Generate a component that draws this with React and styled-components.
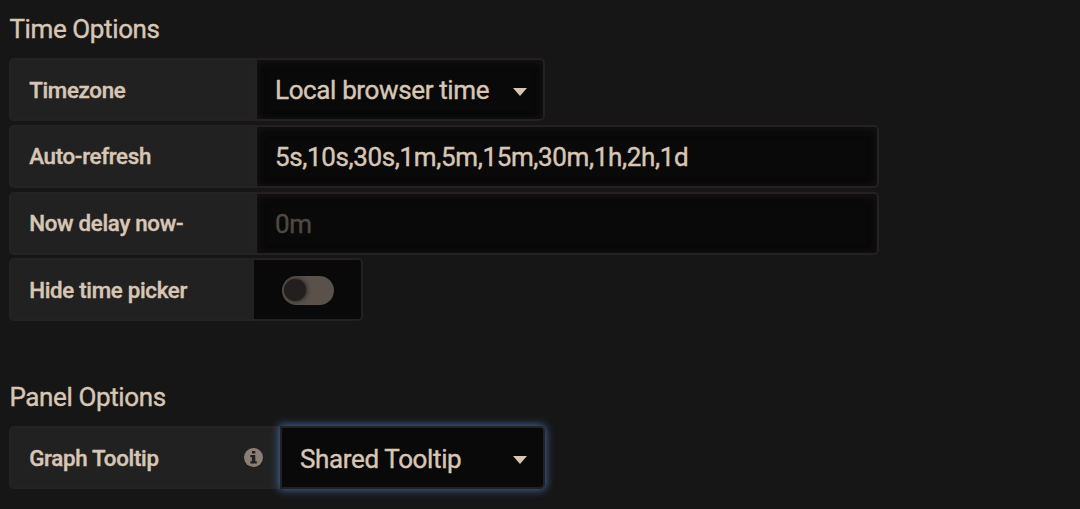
/* ------------------------- External Dependencies -------------------------- */
import React from 'react'
import styled, { createGlobalStyle } from 'styled-components'

/* --------------------------- Styled Components ---------------------------- */
const GlobalStyle = createGlobalStyle`
  * {
    box-sizing: border-box;
  }

  body {
    margin: 0;
    background: #161616;
    color: #d8c6b5;
    font-family: Roboto, "Liberation Sans", sans-serif;
    -webkit-text-stroke: 0.4px;
    overflow: hidden;
  }
`

const Page = styled.main`
  height: 509px;
  padding: 11px 9px 0;
`

const Group = styled.section`
  margin-bottom: 58px;
`

const Heading = styled.h5`
  margin: 0 0 11px;
  height: 36px;
  padding-left: 0.4px;
  line-height: 37px;
  font-size: 26px;
  font-weight: 400;
  letter-spacing: -0.38px;
`

const Row = styled.div`
  display: flex;
  height: 63px;
  margin-bottom: 3.8px;
`

const Label = styled.label`
  display: flex;
  align-items: center;
  justify-content: space-between;
  width: ${p => p.$width || 246}px;
  padding: 0 17px 0 18.2px;
  background: #212121;
  border: 2px solid #252222;
  border-right-width: 0;
  border-radius: 5px 0 0 5px;
  font-size: 22.3px;
  font-weight: 500;
  letter-spacing: -0.3px;
`

const control = `
  height: 63px;
  background: #090909;
  border: 2px solid #252121;
  border-radius: 0 5px 5px 0;
  box-shadow: inset 0 2px 10px #141313, inset 0 0 6px #131212;
`

const Input = styled.input`
  ${control}
  width: 624px;
  padding: 2px 18px 0;
  color: inherit;
  font: 400 26px Roboto, "Liberation Sans", sans-serif;
  letter-spacing: -0.37px;
  -webkit-text-stroke: 0.4px;
  outline: none;

  &::placeholder {
    color: #4f4841;
    opacity: 1;
  }
`

const Select = styled.div`
  ${control}
  display: flex;
  align-items: center;
  justify-content: space-between;
  width: ${p => p.$width}px;
  padding: 1px 16px 0 18px;
  font-size: 26px;
  letter-spacing: -0.37px;

  ${p => p.$focused && `
    padding-top: 2px;
    box-shadow: 0 0 9px 1px #45699f;
    z-index: 1;
  `}
`

const Caret = styled.span`
  width: 0;
  border: 7px solid transparent;
  border-top: 8px solid #d8c6b5;
  border-bottom: 0;
  margin-top: 3px;
`

const SwitchBox = styled.div`
  display: flex;
  align-items: center;
  width: 109px;
  padding: 2px 0 0 28px;
  background: #090909;
  border: 2px solid #252121;
  border-left: 0;
  border-radius: 0 5px 5px 0;
`

const Track = styled.span`
  width: 52px;
  height: 29px;
  padding: 3px 2px;
  background: #59514a;
  border-radius: 15px;
`

const Knob = styled.span`
  display: block;
  width: 22px;
  height: 22px;
  background: #241f1f;
  border-radius: 50%;
  box-shadow: 1px 0 4px #241f1f;
`

const InfoIcon = () => (
  <svg width="19" height="19" viewBox="0 0 19 19">
    <circle cx="9.5" cy="9.5" r="9.5" fill="#8b7f75" />
    <path d="M8 3h3.3v2.6H8zM6.3 7h5v6.3h1.5v2.3H6.3v-2.3h1.6V9.3H6.3z" fill="#212121" />
  </svg>
)

/* ------------------------------- Component -------------------------------- */
export default () => <Page>
  <GlobalStyle />
  <Group>
    <Heading>Time Options</Heading>
    <Row>
      <Label>Timezone</Label>
      <Select $width={290}>Local browser time<Caret /></Select>
    </Row>
    <Row>
      <Label>Auto-refresh</Label>
      <Input defaultValue="5s,10s,30s,1m,5m,15m,30m,1h,2h,1d" />
    </Row>
    <Row>
      <Label>Now delay now-</Label>
      <Input placeholder="0m" />
    </Row>
    <Row>
      <Label $width={245}>Hide time picker</Label>
      <SwitchBox><Track><Knob /></Track></SwitchBox>
    </Row>
  </Group>
  <Group>
    <Heading>Panel Options</Heading>
    <Row>
      <Label $width={271}>Graph Tooltip<InfoIcon /></Label>
      <Select $width={265} $focused>Shared Tooltip<Caret /></Select>
    </Row>
  </Group>
</Page>
